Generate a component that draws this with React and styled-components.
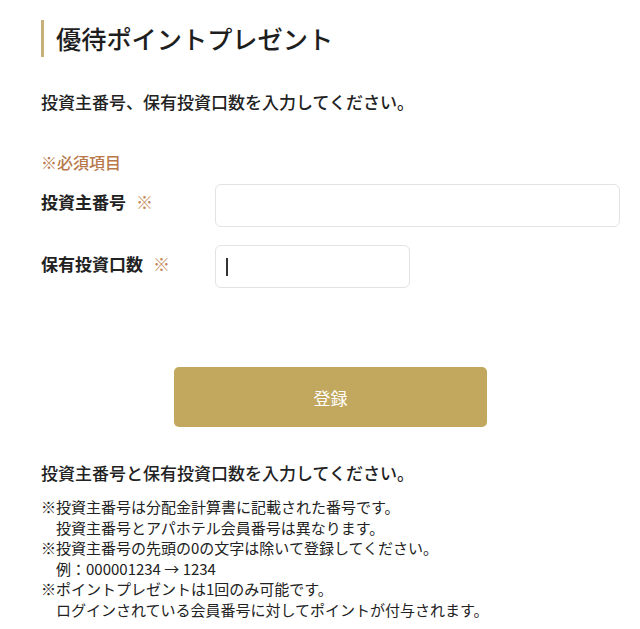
import React from "react";
import styled, { createGlobalStyle } from "styled-components";

const Global = createGlobalStyle`
  html, body { margin: 0; padding: 0; background: #fff; }
  body {
    font-family: "Noto Sans CJK JP", "Noto Sans", sans-serif;
    color: #222;
  }
`;

const Page = styled.div`
  padding: 20px 20px 12px 41px;
`;

const Title = styled.h1`
  margin: 0;
  height: 37px;
  line-height: 37px;
  border-left: 3px solid #c8b07a;
  padding-left: 12px;
  font-size: 25.2px;
  font-weight: 500;
  color: #1e1e1e;
`;

const Lead = styled.p`
  margin: ${(p) => p.$mt}px 0 0;
  font-size: 17px;
  line-height: 25px;
  font-weight: 500;
  color: #222;
`;

const Required = styled.p`
  margin: 36px 0 0;
  font-size: 16px;
  line-height: 24px;
  font-weight: 500;
  color: #b8784a;
`;

const Row = styled.div`
  display: flex;
  align-items: flex-start;
  margin-top: ${(p) => p.$mt}px;
`;

const Label = styled.label`
  flex: 0 0 174px;
  padding-top: ${(p) => p.$pt}px;
  font-size: 17px;
  line-height: 25px;
  font-weight: 700;
  color: #222;
`;

const Mark = styled.span`
  margin-left: 10px;
  color: #c4875a;
  font-weight: 400;
`;

const Field = styled.div`
  position: relative;
  flex: ${(p) => (p.$full ? "1 1 auto" : "0 0 195px")};
`;

const Input = styled.input`
  box-sizing: border-box;
  width: 100%;
  height: 43px;
  border: 1px solid #e3e3e3;
  border-radius: 6px;
  background: #fff;
  outline: none;
  padding: 0 10px;
  font-size: 16px;
  font-family: inherit;
`;

const Caret = styled.span`
  position: absolute;
  left: 11px;
  top: 13px;
  width: 1.5px;
  height: 18px;
  background: #333;
`;

const ButtonWrap = styled.div`
  display: flex;
  justify-content: center;
  margin-top: 79px;
`;

const Button = styled.button`
  width: 313px;
  height: 60px;
  border: none;
  border-radius: 5px;
  background: #c2a85e;
  color: #fff;
  font-family: inherit;
  font-size: 17px;
  font-weight: 400;
  cursor: pointer;
`;

const Notes = styled.div`
  margin-top: 12px;
  font-size: 15px;
  line-height: 20.6px;
  color: #222;
`;

const Note = styled.div`
  padding-left: 1em;
  text-indent: -1em;
`;

export default function App() {
  return (
    <>
      <Global />
      <Page>
        <Title>優待ポイントプレゼント</Title>
        <Lead $mt={32}>投資主番号、保有投資口数を入力してください。</Lead>
        <Required>※必須項目</Required>
        <Row $mt={10}>
          <Label $pt={5}>
            投資主番号<Mark>※</Mark>
          </Label>
          <Field $full>
            <Input type="text" />
          </Field>
        </Row>
        <Row $mt={18}>
          <Label $pt={6}>
            保有投資口数<Mark>※</Mark>
          </Label>
          <Field>
            <Input type="text" />
            <Caret />
          </Field>
        </Row>
        <ButtonWrap>
          <Button type="button">登録</Button>
        </ButtonWrap>
        <Lead $mt={33}>投資主番号と保有投資口数を入力してください。</Lead>
        <Notes>
          <Note>
            ※投資主番号は分配金計算書に記載された番号です。
            <br />
            投資主番号とアパホテル会員番号は異なります。
          </Note>
          <Note>
            ※投資主番号の先頭の0の文字は除いて登録してください。
            <br />
            例：000001234 → 1234
          </Note>
          <Note>
            ※ポイントプレゼントは1回のみ可能です。
            <br />
            ログインされている会員番号に対してポイントが付与されます。
          </Note>
        </Notes>
      </Page>
    </>
  );
}
